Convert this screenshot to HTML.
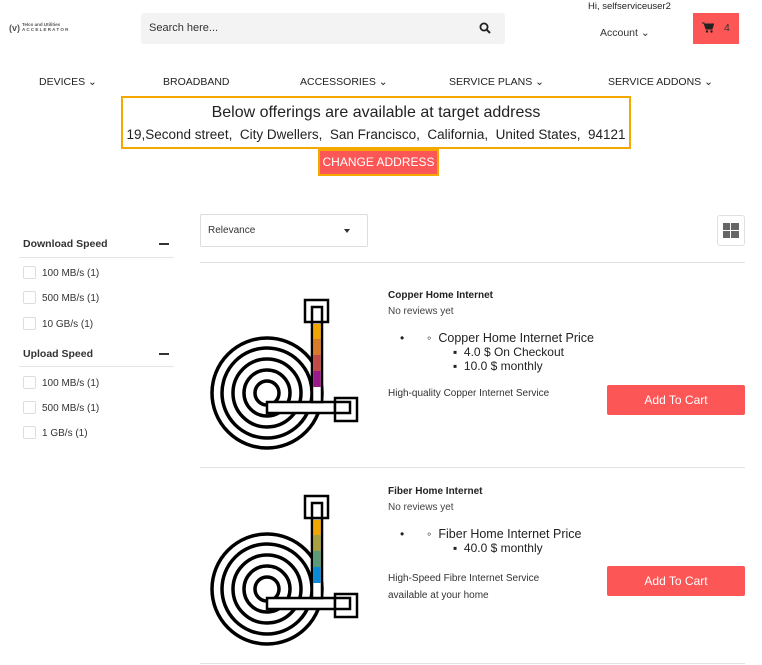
<!DOCTYPE html>
<html><head><meta charset="utf-8"><style>
*{margin:0;padding:0;box-sizing:border-box}
body{width:762px;height:665px;background:#fff;font-family:"Liberation Sans",sans-serif;color:#222;position:relative;overflow:hidden}
.a{position:absolute;white-space:nowrap}
.nav{font-size:10.5px;color:#222;top:76px}
.cb{position:absolute;width:13px;height:13px;border:1px solid #ddd;border-radius:2px;left:23px}
.fl{position:absolute;left:42px;font-size:10px;color:#333}
.btn{position:absolute;left:607px;width:138px;height:30px;background:#fc5656;color:#fff;font-size:12px;text-align:center;line-height:30px;border-radius:2px}
</style></head><body>
<div class="a" style="left:9px;top:23px;font-size:9px;font-weight:bold;color:#555">(v)</div>
<div class="a" style="left:22px;top:22px;font-size:4.5px;font-weight:bold;color:#555;line-height:5px">Telco and Utilities<br>A C C E L E R A T O R</div>
<div class="a" style="left:141px;top:13px;width:364px;height:31px;background:#f3f3f3;border-radius:3px"></div>
<div class="a" style="left:149px;top:22px;font-size:11px;color:#333">Search here...</div>
<svg class="a" style="left:479px;top:22px" width="12" height="12" viewBox="0 0 12 12"><circle cx="5" cy="5" r="3.6" fill="none" stroke="#222" stroke-width="1.8"/><line x1="7.6" y1="7.6" x2="11" y2="11" stroke="#222" stroke-width="2"/></svg>
<div class="a" style="left:588px;top:1px;font-size:9.5px;color:#222">Hi, selfserviceuser2</div>
<div class="a" style="left:600px;top:27px;font-size:10.5px;color:#333">Account ⌄</div>
<div class="a" style="left:693px;top:13px;width:46px;height:31px;background:#fc5656"></div>
<svg class="a" style="left:702px;top:22px" width="12" height="11" viewBox="0 0 12 11"><path d="M0 1h2l2 6h6l1.5-5H3" fill="#222" stroke="#222" stroke-width="1"/><circle cx="5" cy="9.5" r="1.2" fill="#222"/><circle cx="9.5" cy="9.5" r="1.2" fill="#222"/></svg>
<div class="a" style="left:724px;top:22px;font-size:10.5px;color:#333">4</div>
<div class="a nav" style="left:39px">DEVICES ⌄</div>
<div class="a nav" style="left:163px">BROADBAND</div>
<div class="a nav" style="left:300px">ACCESSORIES ⌄</div>
<div class="a nav" style="left:449px">SERVICE PLANS ⌄</div>
<div class="a nav" style="left:608px">SERVICE ADDONS ⌄</div>
<div class="a" style="left:121px;top:96px;width:510px;height:53px;border:2px solid #f5a800"></div>
<div class="a" style="left:121px;width:510px;top:104px;text-align:center;font-size:16px;color:#222">Below offerings are available at target address</div>
<div class="a" style="left:121px;width:510px;top:127px;text-align:center;font-size:13.5px;color:#222">19,Second street,&nbsp; City Dwellers,&nbsp; San Francisco,&nbsp; California,&nbsp; United States,&nbsp; 94121</div>
<div class="a" style="left:318px;top:149px;width:121px;height:27px;border:2px solid #f5a800;background:#fc5656;color:#fff;font-size:12px;text-align:center;line-height:23px">CHANGE ADDRESS</div>
<div class="a" style="left:23px;top:238px;font-size:10.5px;font-weight:bold;color:#333">Download Speed</div>
<div class="a" style="left:159px;top:243px;width:10px;height:2px;background:#333"></div>
<div class="a" style="left:19px;top:257px;width:155px;height:1px;background:#e5e5e5"></div>
<div class="cb" style="top:266px"></div><div class="fl" style="top:268px">100 MB/s (1)</div>
<div class="cb" style="top:291px"></div><div class="fl" style="top:293px">500 MB/s (1)</div>
<div class="cb" style="top:317px"></div><div class="fl" style="top:319px">10 GB/s (1)</div>
<div class="a" style="left:23px;top:348px;font-size:10.5px;font-weight:bold;color:#333">Upload Speed</div>
<div class="a" style="left:159px;top:353px;width:10px;height:2px;background:#333"></div>
<div class="a" style="left:19px;top:366px;width:155px;height:1px;background:#e5e5e5"></div>
<div class="cb" style="top:376px"></div><div class="fl" style="top:378px">100 MB/s (1)</div>
<div class="cb" style="top:401px"></div><div class="fl" style="top:403px">500 MB/s (1)</div>
<div class="cb" style="top:426px"></div><div class="fl" style="top:428px">1 GB/s (1)</div>
<div class="a" style="left:200px;top:214px;width:168px;height:33px;border:1px solid #ddd;border-radius:2px"></div>
<div class="a" style="left:208px;top:225px;font-size:10px;color:#333">Relevance</div>
<div class="a" style="left:344px;top:229px;border-left:3.5px solid transparent;border-right:3.5px solid transparent;border-top:4px solid #333"></div>
<div class="a" style="left:717px;top:215px;width:28px;height:31px;border:1px solid #e0e0e0;border-radius:3px"></div>
<div class="a" style="left:723px;top:223px;width:16px;height:15px;background:#666;border:0"></div>
<div class="a" style="left:730px;top:223px;width:1px;height:15px;background:#fff"></div>
<div class="a" style="left:723px;top:230px;width:16px;height:1px;background:#fff"></div>
<div class="a" style="left:200px;top:262px;width:545px;height:1px;background:#e2e2e2"></div>
<div class="a" style="left:200px;top:467px;width:545px;height:1px;background:#e2e2e2"></div>
<div class="a" style="left:200px;top:663px;width:545px;height:1px;background:#e2e2e2"></div>

<svg class="a" style="left:200px;top:290px" width="165" height="170" viewBox="0 0 165 170">
<g fill="none" stroke="#000" stroke-width="3.5">
<circle cx="67" cy="103" r="55"/><circle cx="67" cy="103" r="45"/><circle cx="67" cy="103" r="34"/><circle cx="67" cy="103" r="23"/><circle cx="67" cy="103" r="12"/>
</g>
<rect x="67" y="112" width="70" height="11" fill="#fff" stroke="#000" stroke-width="2.5"/>
<rect x="112" y="28" width="10" height="84" fill="#fff" stroke="#000" stroke-width="2.5"/>
<rect x="113.3" y="34" width="7.4" height="15" fill="#f0a500"/><rect x="113.3" y="49" width="7.4" height="16" fill="#d97a2a"/><rect x="113.3" y="65" width="7.4" height="16" fill="#c44a4a"/><rect x="113.3" y="81" width="7.4" height="16" fill="#9b1a8a"/>
<rect x="105" y="10" width="23" height="22" fill="#fff" stroke="#000" stroke-width="2.5"/><rect x="112" y="17" width="10" height="15" fill="#fff" stroke="#000" stroke-width="2.5"/>
<rect x="135" y="108" width="22" height="23" fill="#fff" stroke="#000" stroke-width="2.5"/><rect x="135" y="112" width="15" height="11" fill="#fff" stroke="#000" stroke-width="2.5"/>
</svg>
<svg class="a" style="left:200px;top:486px" width="165" height="170" viewBox="0 0 165 170">
<g fill="none" stroke="#000" stroke-width="3.5">
<circle cx="67" cy="103" r="55"/><circle cx="67" cy="103" r="45"/><circle cx="67" cy="103" r="34"/><circle cx="67" cy="103" r="23"/><circle cx="67" cy="103" r="12"/>
</g>
<rect x="67" y="112" width="70" height="11" fill="#fff" stroke="#000" stroke-width="2.5"/>
<rect x="112" y="28" width="10" height="84" fill="#fff" stroke="#000" stroke-width="2.5"/>
<rect x="113.3" y="34" width="7.4" height="15" fill="#f0a500"/><rect x="113.3" y="49" width="7.4" height="16" fill="#a8a040"/><rect x="113.3" y="65" width="7.4" height="16" fill="#5a9a78"/><rect x="113.3" y="81" width="7.4" height="16" fill="#0a8ad8"/>
<rect x="105" y="10" width="23" height="22" fill="#fff" stroke="#000" stroke-width="2.5"/><rect x="112" y="17" width="10" height="15" fill="#fff" stroke="#000" stroke-width="2.5"/>
<rect x="135" y="108" width="22" height="23" fill="#fff" stroke="#000" stroke-width="2.5"/><rect x="135" y="112" width="15" height="11" fill="#fff" stroke="#000" stroke-width="2.5"/>
</svg>

<div class="a" style="left:388px;top:290px;font-size:10px;font-weight:bold">Copper Home Internet</div>
<div class="a" style="left:388px;top:306px;font-size:10px;color:#444">No reviews yet</div>
<div class="a" style="left:400px;top:331px;font-size:12px">•</div>
<div class="a" style="left:427px;top:331px;font-size:12.5px">◦&nbsp; Copper Home Internet Price</div>
<div class="a" style="left:453px;top:345px;font-size:12px">▪&nbsp; 4.0 $ On Checkout</div>
<div class="a" style="left:453px;top:359px;font-size:12px">▪&nbsp; 10.0 $ monthly</div>
<div class="a" style="left:388px;top:388px;font-size:10px;color:#333">High-quality Copper Internet Service</div>
<div class="btn" style="top:385px">Add To Cart</div>

<div class="a" style="left:388px;top:486px;font-size:10px;font-weight:bold">Fiber Home Internet</div>
<div class="a" style="left:388px;top:502px;font-size:10px;color:#444">No reviews yet</div>
<div class="a" style="left:400px;top:527px;font-size:12px">•</div>
<div class="a" style="left:427px;top:527px;font-size:12.5px">◦&nbsp; Fiber Home Internet Price</div>
<div class="a" style="left:453px;top:541px;font-size:12px">▪&nbsp; 40.0 $ monthly</div>
<div class="a" style="left:388px;top:570px;font-size:10px;color:#333;line-height:17px">High-Speed Fibre Internet Service<br>available at your home</div>
<div class="btn" style="top:566px">Add To Cart</div>
</body></html>
